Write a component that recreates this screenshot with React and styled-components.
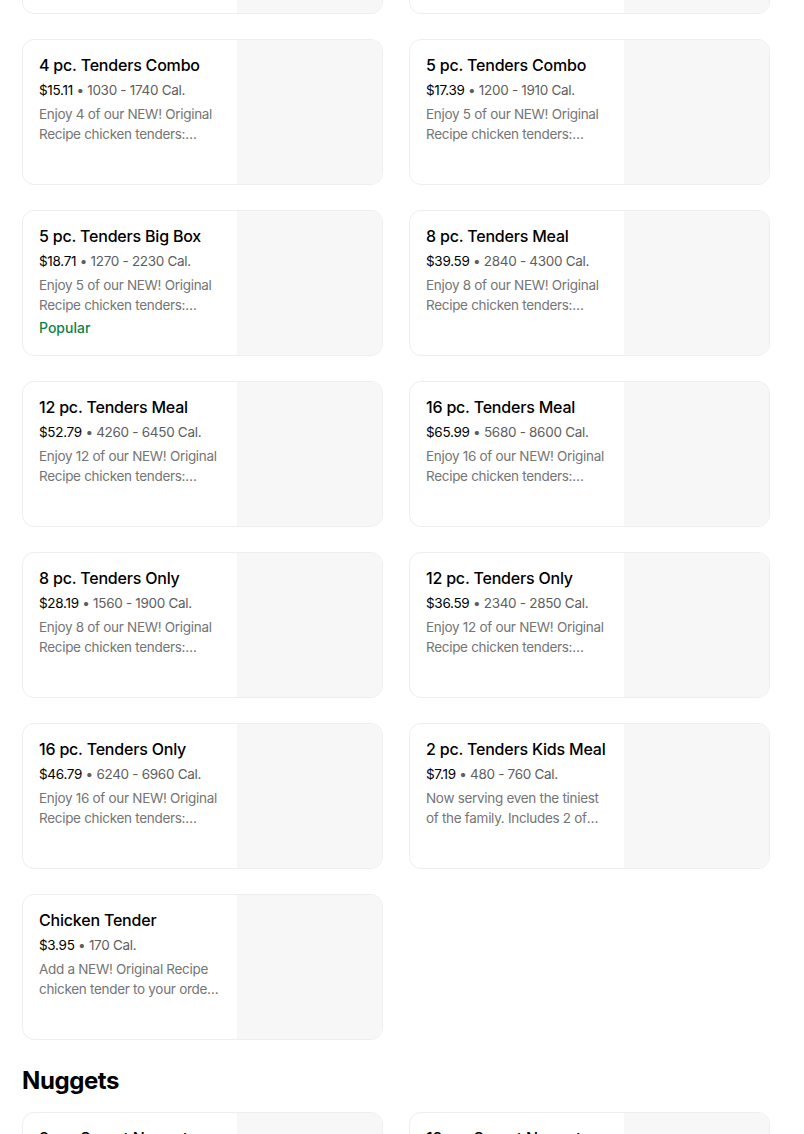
import React from "react";
import styled, {createGlobalStyle} from "styled-components";

const GlobalStyle = createGlobalStyle`
  html, body {
    margin: 0;
    padding: 0;
    background: #fff;
    overflow: hidden;
  }
  body {
    font-family: Inter, "Noto Sans", sans-serif;
    color: #000;
    -webkit-font-smoothing: antialiased;
  }
`;

const Page = styled.div`
  padding: 0 34px 0 22px;
  margin-top: -132px;
`;

const Grid = styled.div`
  display: grid;
  grid-template-columns: 361px 361px;
  column-gap: 26px;
  row-gap: 25px;
`;

const SectionTitle = styled.h2`
  margin: 25px 0 15px;
  font-size: 24px;
  line-height: 32px;
  font-weight: 700;
  letter-spacing: -0.4px;
`;

const Card = styled.div`
  display: flex;
  height: 146px;
  box-sizing: border-box;
  border: 1px solid #eeeeee;
  border-radius: 12px;
  overflow: hidden;
  background: #fff;
`;

const Info = styled.div`
  flex: 1;
  min-width: 0;
  padding: 15px 16px 0 16px;
  display: flex;
  flex-direction: column;
`;

const Title = styled.div`
  font-size: 16px;
  line-height: 20px;
  font-weight: 500;
  letter-spacing: -0.2px;
  white-space: nowrap;
`;

const Meta = styled.div`
  margin-top: 5px;
  font-size: 13.5px;
  line-height: 20px;
  color: #5e5e5e;
  letter-spacing: -0.3px;
  white-space: nowrap;
`;

const Price = styled.span`
  color: #000;
`;

const Desc = styled.div`
  margin-top: 4px;
  font-size: 13.5px;
  line-height: 20px;
  color: #757575;
  letter-spacing: -0.3px;
  display: -webkit-box;
  -webkit-line-clamp: 2;
  -webkit-box-orient: vertical;
  overflow: hidden;
`;

const Badge = styled.div`
  margin-top: 3px;
  font-size: 14px;
  line-height: 20px;
  font-weight: 500;
  color: #0e8345;
`;

const Photo = styled.div`
  width: 145px;
  flex-shrink: 0;
  background: #f7f7f7;
`;

const tenders = [
  {title: "3 pc. Tenders Combo", price: "$12.59", cal: "850 - 1520 Cal.", desc: "Enjoy 3 of our NEW! Original Recipe chicken tenders: hand-breaded and fried."},
  {title: "3 pc. Tenders Meal", price: "$14.39", cal: "980 - 1640 Cal.", desc: "Enjoy 3 of our NEW! Original Recipe chicken tenders: hand-breaded and fried."},
  {title: "4 pc. Tenders Combo", price: "$15.11", cal: "1030 - 1740 Cal.", desc: "Enjoy 4 of our NEW! Original Recipe chicken tenders: hand-breaded and fried."},
  {title: "5 pc. Tenders Combo", price: "$17.39", cal: "1200 - 1910 Cal.", desc: "Enjoy 5 of our NEW! Original Recipe chicken tenders: hand-breaded and fried."},
  {title: "5 pc. Tenders Big Box", price: "$18.71", cal: "1270 - 2230 Cal.", desc: "Enjoy 5 of our NEW! Original Recipe chicken tenders: hand-breaded and fried.", popular: true},
  {title: "8 pc. Tenders Meal", price: "$39.59", cal: "2840 - 4300 Cal.", desc: "Enjoy 8 of our NEW! Original Recipe chicken tenders: hand-breaded and fried."},
  {title: "12 pc. Tenders Meal", price: "$52.79", cal: "4260 - 6450 Cal.", desc: "Enjoy 12 of our NEW! Original Recipe chicken tenders: hand-breaded and fried."},
  {title: "16 pc. Tenders Meal", price: "$65.99", cal: "5680 - 8600 Cal.", desc: "Enjoy 16 of our NEW! Original Recipe chicken tenders: hand-breaded and fried."},
  {title: "8 pc. Tenders Only", price: "$28.19", cal: "1560 - 1900 Cal.", desc: "Enjoy 8 of our NEW! Original Recipe chicken tenders: hand-breaded and fried."},
  {title: "12 pc. Tenders Only", price: "$36.59", cal: "2340 - 2850 Cal.", desc: "Enjoy 12 of our NEW! Original Recipe chicken tenders: hand-breaded and fried."},
  {title: "16 pc. Tenders Only", price: "$46.79", cal: "6240 - 6960 Cal.", desc: "Enjoy 16 of our NEW! Original Recipe chicken tenders: hand-breaded and fried."},
  {title: "2 pc. Tenders Kids Meal", price: "$7.19", cal: "480 - 760 Cal.", desc: "Now serving even the tiniest of the family. Includes 2 of our NEW! Original Recipe tenders."},
  {title: "Chicken Tender", price: "$3.95", cal: "170 Cal.", desc: "Add a NEW! Original Recipe chicken tender to your order. Hand-breaded and fried."},
];

const nuggets = [
  {title: "8 pc. Secret Nuggets", price: "$6.99", cal: "380 - 440 Cal.", desc: "Our Secret Recipe nuggets, hand-breaded and fried."},
  {title: "12 pc. Secret Nuggets", price: "$9.99", cal: "570 - 660 Cal.", desc: "Our Secret Recipe nuggets, hand-breaded and fried."},
];

const MenuItem = ({item}) => (
  <Card>
    <Info>
      <Title>{item.title}</Title>
      <Meta><Price>{item.price}</Price> • {item.cal}</Meta>
      <Desc>{item.desc}</Desc>
      {item.popular && <Badge>Popular</Badge>}
    </Info>
    <Photo/>
  </Card>
);

const App = () => (
  <Page>
    <GlobalStyle/>
    <Grid>
      {tenders.map(item => <MenuItem key={item.title} item={item}/>)}
    </Grid>
    <SectionTitle>Nuggets</SectionTitle>
    <Grid>
      {nuggets.map(item => <MenuItem key={item.title} item={item}/>)}
    </Grid>
  </Page>
);

export default App;
